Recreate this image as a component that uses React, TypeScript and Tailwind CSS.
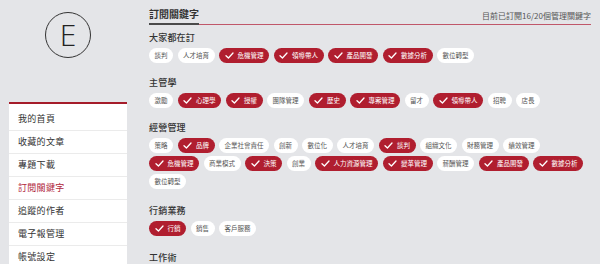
import React from "react";

type Tag = { label: string; on?: boolean };

const sections: { title: string; tags: Tag[] }[] = [
  {
    title: "大家都在訂",
    tags: [
      { label: "談判" },
      { label: "人才培育" },
      { label: "危機管理", on: true },
      { label: "領導帶人", on: true },
      { label: "產品開發", on: true },
      { label: "數據分析", on: true },
      { label: "數位轉型" },
    ],
  },
  {
    title: "主管學",
    tags: [
      { label: "激勵" },
      { label: "心理學", on: true },
      { label: "授權", on: true },
      { label: "團隊管理" },
      { label: "歷史", on: true },
      { label: "專案管理", on: true },
      { label: "留才" },
      { label: "領導帶人", on: true },
      { label: "招聘" },
      { label: "店長" },
    ],
  },
  {
    title: "經營管理",
    tags: [
      { label: "策略" },
      { label: "品牌", on: true },
      { label: "企業社會責任" },
      { label: "創新" },
      { label: "數位化" },
      { label: "人才培育" },
      { label: "談判", on: true },
      { label: "組織文化" },
      { label: "財務管理" },
      { label: "績效管理" },
      { label: "危機管理", on: true },
      { label: "商業模式" },
      { label: "決策", on: true },
      { label: "創業" },
      { label: "人力資源管理", on: true },
      { label: "變革管理", on: true },
      { label: "薪酬管理" },
      { label: "產品開發", on: true },
      { label: "數據分析", on: true },
      { label: "數位轉型" },
    ],
  },
  {
    title: "行銷業務",
    tags: [{ label: "行銷", on: true }, { label: "銷售" }, { label: "客戶服務" }],
  },
  // tags of this one fall below the fold
  { title: "工作術", tags: [] },
];

const menu = ["我的首頁", "收藏的文章", "專題下載", "訂閱關鍵字", "追蹤的作者", "電子報管理", "帳號設定"];

const Check = () => (
  <svg viewBox="0 0 10 8" className="w-[9px] h-[7px] shrink-0" fill="none">
    <path d="M1 4.2 L3.8 6.8 L9 1.2" stroke="white" strokeWidth="1.5" strokeLinecap="round" strokeLinejoin="round" />
  </svg>
);

const Chip = ({ tag }: { tag: Tag }) =>
  tag.on ? (
    <span className="flex items-center gap-[4px] h-[15px] px-[5.5px] rounded-full bg-[#b01e2f] text-white text-[6.5px] leading-none">
      <Check />
      {tag.label}
    </span>
  ) : (
    <span className="flex items-center h-[15px] px-[5.5px] rounded-full bg-white text-[#555] text-[6.5px] leading-none">
      {tag.label}
    </span>
  );

export default function App() {
  return (
    <div
      className="h-screen overflow-hidden bg-[#e4e5e8] flex pl-[9px]"
      style={{ fontFamily: '"Noto Sans CJK TC", "Noto Sans", sans-serif' }}
    >
      <aside className="w-[118px] shrink-0">
        <div className="mx-auto mt-[12px] w-[46px] h-[46px] rounded-full border border-[#333] flex items-center justify-center">
          <span className="text-[30px] font-light text-[#222] leading-none" style={{ fontFamily: '"Open Sans", sans-serif' }}>
            E
          </span>
        </div>
        <div className="mt-[44px] bg-white border-t-2 border-[#a51c2a] pt-[4px]">
          {menu.map((item) => (
            <div
              key={item}
              className={`h-[23px] flex items-center pl-[9px] border-b border-[#ebebeb] text-[9px] tracking-[0.3px] ${
                item === "訂閱關鍵字" ? "text-[#b0263b]" : "text-[#333]"
              }`}
            >
              {item}
            </div>
          ))}
        </div>
      </aside>

      <main className="ml-[22px] w-[442px] shrink-0 pt-[7px]">
        <div className="flex items-end">
          <h2 className="border-b-2 border-[#4a4a4a] pb-[2px] text-[10px] leading-[14px] font-bold text-[#333]">
            訂閱關鍵字
          </h2>
          <div className="flex-1 border-b border-[#c0576a] mb-[0.5px] pb-[2px] text-right text-[8px] leading-[12px] text-[#555]">
            目前已訂閱16/20個管理關鍵字
          </div>
        </div>

        <div className="mt-[7px] flex flex-col gap-[14px]">
          {sections.map((s, idx) => (
            <section key={s.title} className={idx >= 3 ? "pt-[2px]" : ""}>
              <h3 className="text-[9px] leading-[12px] tracking-[0.2px] font-medium text-[#333] mb-[4px]">{s.title}</h3>
              {s.tags.length > 0 && (
                <div className="flex flex-wrap gap-x-[4.5px] gap-y-[3px]">
                  {s.tags.map((t, i) => (
                    <Chip key={i} tag={t} />
                  ))}
                </div>
              )}
            </section>
          ))}
        </div>
      </main>
    </div>
  );
}
